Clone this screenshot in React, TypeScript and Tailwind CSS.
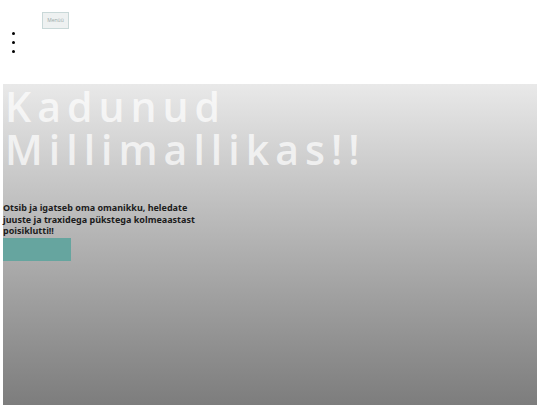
export default function App() {
  return (
    <div className="min-h-[405px] w-[540px] bg-white font-['Open_Sans',sans-serif] overflow-hidden">
      <nav className="pt-[4px] pl-[42px]">
        <button className="h-[17px] w-[27px] border border-[#c9d8d8] bg-[#eef1f1] text-[5px] text-[#9aa7a7] leading-none">
          Menüü
        </button>
      </nav>
      <ul className="mt-0 list-disc pl-[25px] text-[8px] leading-[9px] text-black">
        <li className="h-[9px]"></li>
        <li className="h-[9px]"></li>
        <li className="h-[9px]"></li>
      </ul>
      <section className="mx-[3px] mt-[28px] h-[330px] bg-gradient-to-b from-[#e9e9e9] to-[#7a7a7a] pt-[1px]">
        <h1 className="font-['Open_Sans',sans-serif] text-[41px] font-semibold leading-[43px] tracking-[6px] text-white/70 pl-[2px]">
          Kadunud
          <br />
          Millimallikas!!
        </h1>
        <p className="mt-[31px] w-[200px] text-[9px] font-bold leading-[11.5px] text-[#1c1c1c] font-['Noto_Sans',sans-serif]">
          Otsib ja igatseb oma omanikku, heledate juuste ja traxidega pükstega kolmeaastast poisiklutti!!
        </p>
        <button className="mt-[1px] block h-[23px] w-[68px] bg-[#66a59f]"></button>
      </section>
    </div>
  );
}
